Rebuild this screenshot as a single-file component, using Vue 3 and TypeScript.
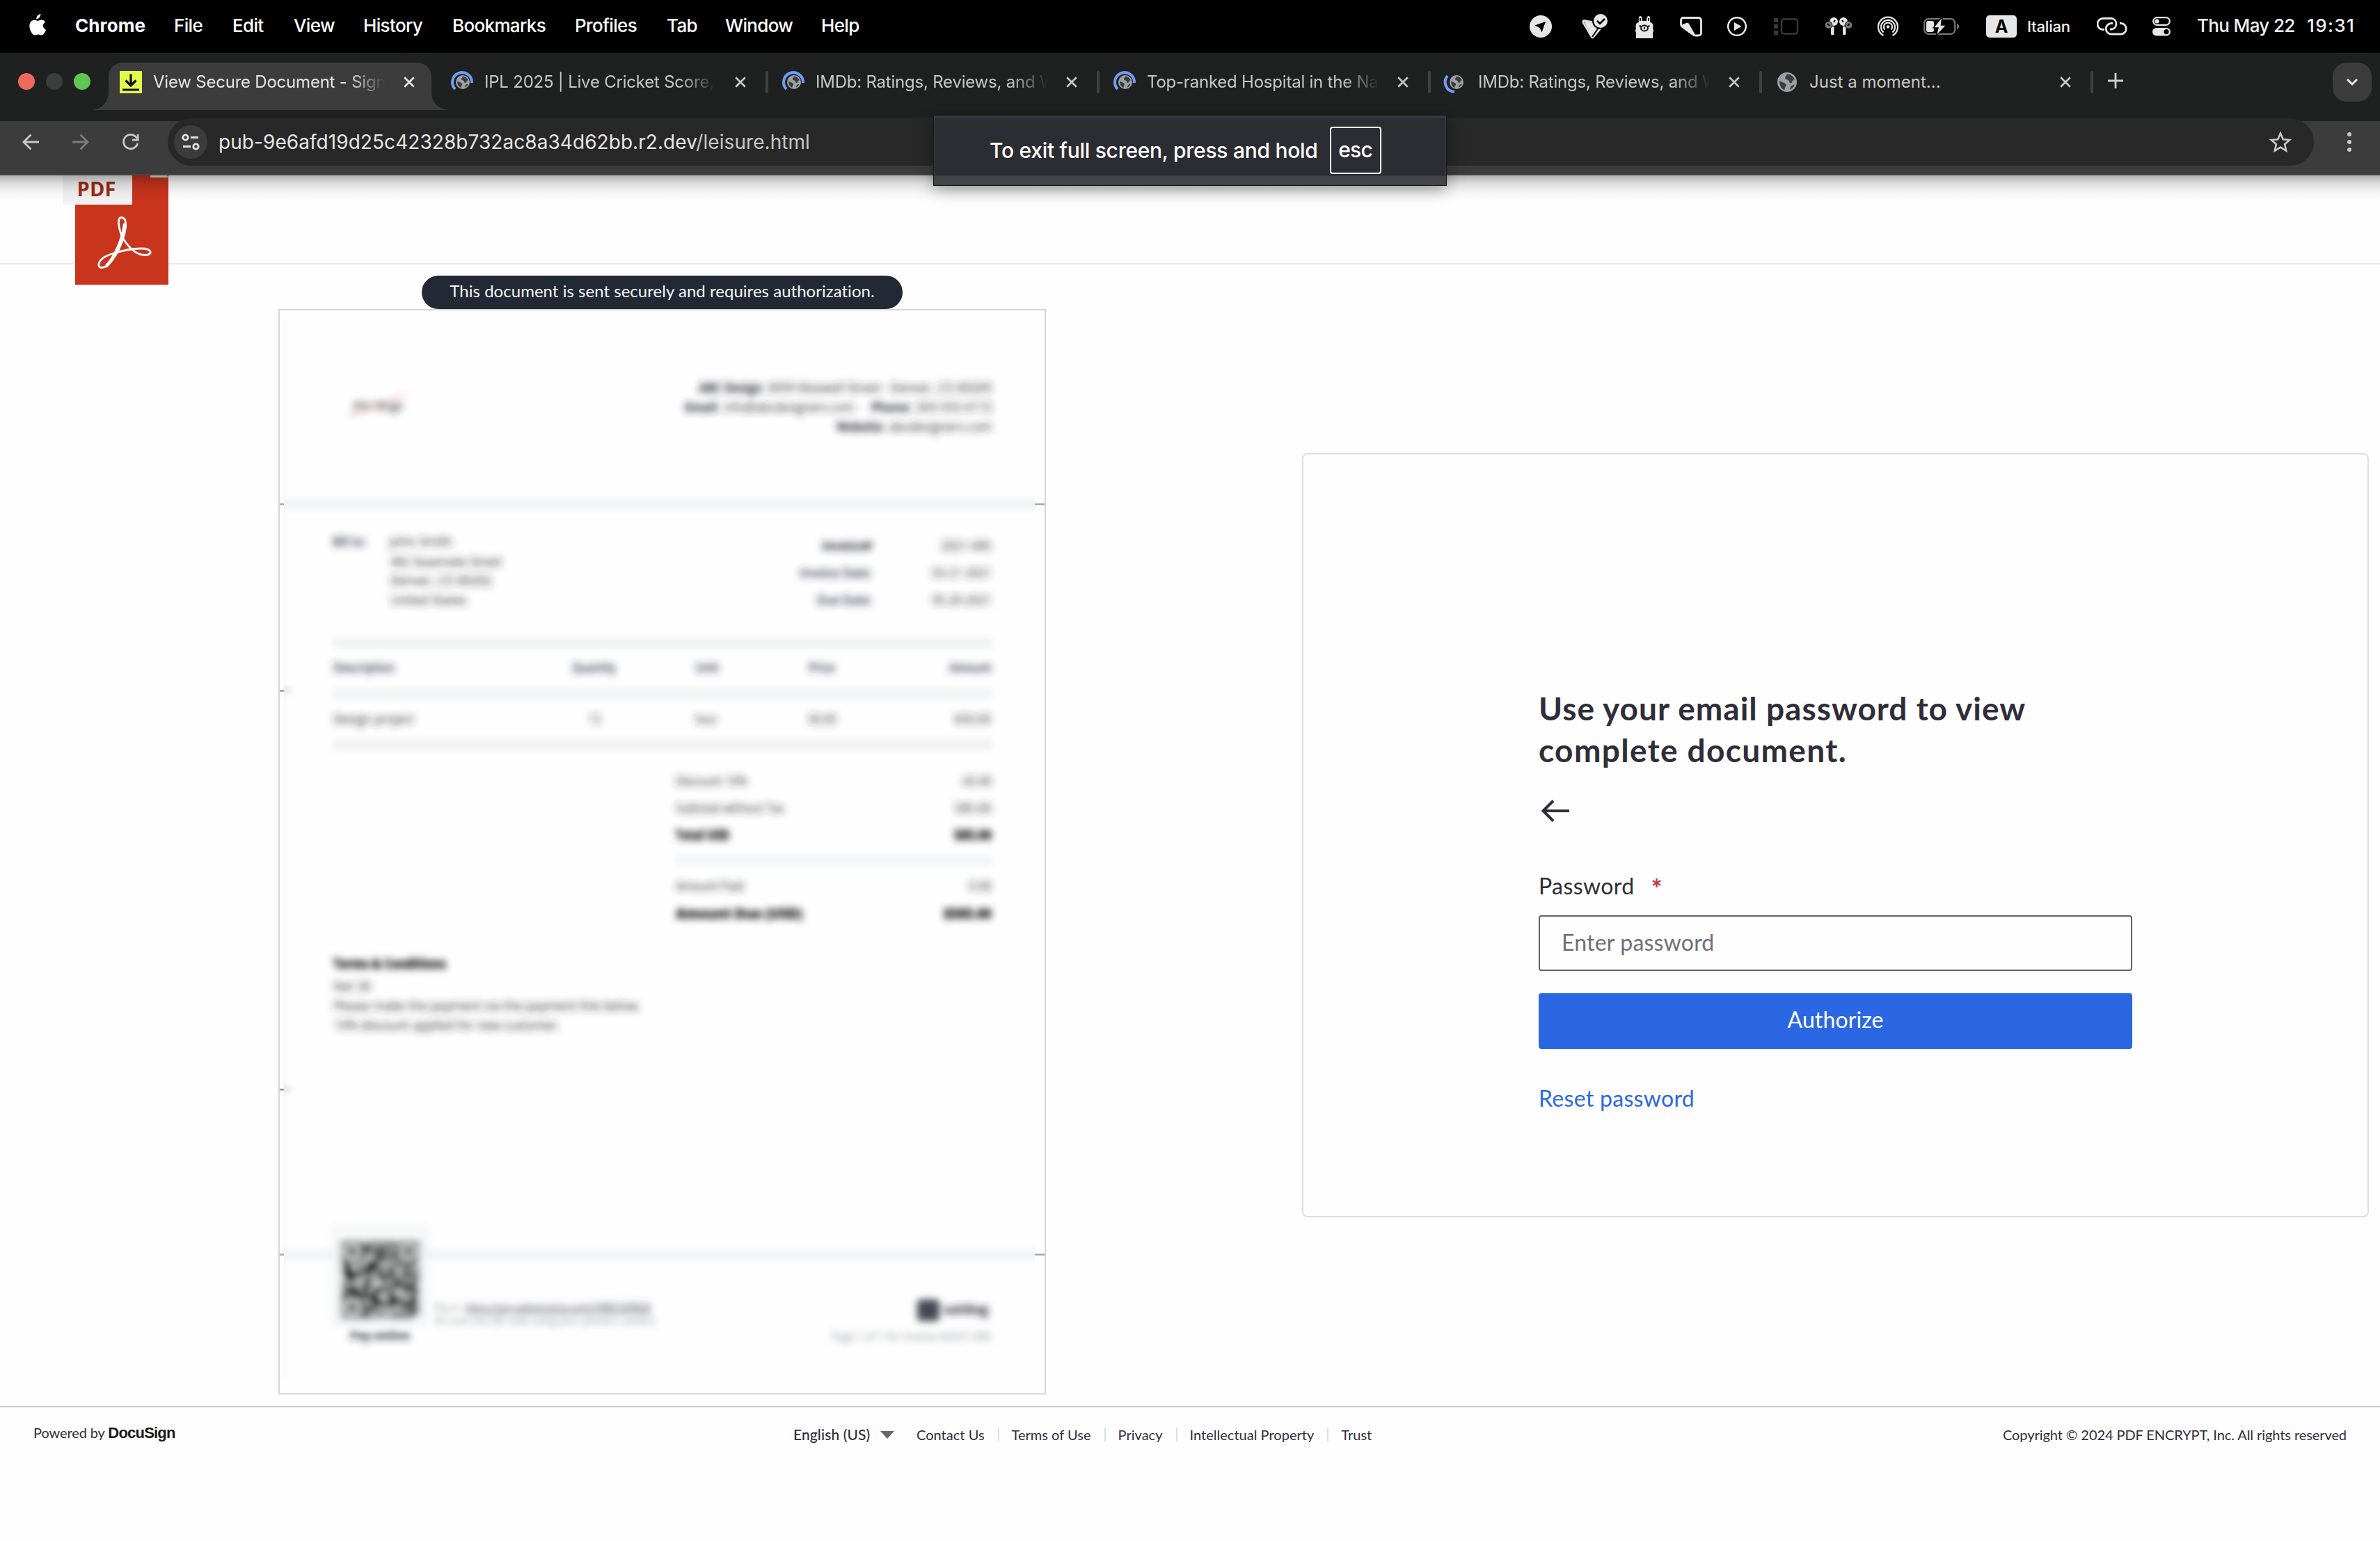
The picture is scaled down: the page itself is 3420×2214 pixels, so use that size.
<script setup lang="ts">
interface Tab { title: string; icon: 'download' | 'loading' | 'loadingLow' | 'globe'; active?: boolean }

const menus = ['File', 'Edit', 'View', 'History', 'Bookmarks', 'Profiles', 'Tab', 'Window', 'Help']

const tabs: Tab[] = [
  { title: 'View Secure Document - Sign', icon: 'download', active: true },
  { title: 'IPL 2025 | Live Cricket Score,', icon: 'loading' },
  { title: 'IMDb: Ratings, Reviews, and W', icon: 'loading' },
  { title: 'Top-ranked Hospital in the Na', icon: 'loading' },
  { title: 'IMDb: Ratings, Reviews, and W', icon: 'loadingLow' },
  { title: 'Just a moment...', icon: 'globe' },
]

const footerLinks = ['Contact Us', 'Terms of Use', 'Privacy', 'Intellectual Property', 'Trust']

/* Lines of the blurred invoice: x, baseline, width, text, weight class */
type Line = [number, number, number, string, string]
const lines: Line[] = [
  [1004, 564, 92, 'ABC Design', 'b'],
  [1102, 564, 324, '3059 Maxwell Street · Denver, CO 80205', 'n'],
  [984, 592, 50, 'Email:', 'b'],
  [1040, 592, 196, 'info@abcdesigners.com ·', 'n'],
  [1252, 592, 58, 'Phone:', 'b'],
  [1316, 592, 110, '303-555-0172', 'n'],
  [1202, 620, 70, 'Website:', 'b'],
  [1277, 620, 149, 'abcdesigners.com', 'n'],
  [478, 785, 48, 'Bill to:', 's'],
  [560, 785, 90, 'John Smith', 'n'],
  [561, 814, 160, '482 Seasmoke Street', 'n'],
  [561, 841, 146, 'Denver, CO 80202', 'n'],
  [561, 869, 110, 'United States', 'n'],
  [1181, 791, 72, 'Invoice#', 'b'],
  [1352, 791, 73, '2021-085', 'n'],
  [1149, 830, 104, 'Invoice Date:', 's'],
  [1339, 830, 86, '03-21-2021', 'n'],
  [1174, 869, 79, 'Due Date:', 's'],
  [1339, 869, 86, '05-20-2021', 'n'],
  [479, 966, 88, 'Description', 's'],
  [822, 966, 63, 'Quantity', 's'],
  [999, 966, 34, 'Unit', 's'],
  [1162, 966, 38, 'Price', 's'],
  [1364, 966, 61, 'Amount', 's'],
  [479, 1040, 116, 'Design project', 'n'],
  [846, 1040, 17, '13', 'n'],
  [999, 1040, 32, 'hour', 'n'],
  [1161, 1040, 41, '50.00', 'n'],
  [1371, 1040, 53, '650.00', 'n'],
  [971, 1129, 103, 'Discount 10%', 'n'],
  [1380, 1129, 45, '-65.00', 'n'],
  [971, 1168, 156, 'Subtotal without Tax', 'n'],
  [1371, 1168, 54, '585.00', 'n'],
  [971, 1207, 77, 'Total USD', 'k'],
  [1371, 1207, 54, '585.00', 'k'],
  [971, 1280, 98, 'Amount Paid', 'n'],
  [1392, 1280, 33, '0.00', 'n'],
  [971, 1320, 182, 'Amount Due (USD)', 'k'],
  [1356, 1320, 69, '$585.00', 'k'],
  [479, 1392, 162, 'Terms & Conditions', 'k'],
  [479, 1424, 54, 'Net 30', 'n'],
  [479, 1452, 442, 'Please make the payment via the payment link below.', 'n'],
  [480, 1480, 325, '10% discount applied for new customer.', 'n'],
  [503, 1925, 86, 'Pay online', 'b'],
]

const rules = [
  { x: 478, y: 915, w: 948, c: '#f1f3f2' },
  { x: 478, y: 988, w: 948, c: '#f2f3f4' },
  { x: 478, y: 1061, w: 948, c: '#f3f3f3' },
  { x: 970, y: 1228, w: 456, c: '#f3f5f7' },
]

/* Module pattern for the payment code */
const N = 25
const inFinder = (r: number, c: number, r0: number, c0: number) => {
  const y = r - r0, x = c - c0
  if (y < 0 || x < 0 || y > 6 || x > 6) return null
  const d = Math.max(Math.abs(y - 3), Math.abs(x - 3))
  return d !== 2
}
const modules: { x: number; y: number }[] = []
let seed = 77
for (let r = 0; r < N; r++) {
  for (let c = 0; c < N; c++) {
    seed = (seed * 1103515245 + 12345) % 2147483648
    const f = inFinder(r, c, 0, 0) ?? inFinder(r, c, 0, 18) ?? inFinder(r, c, 18, 0)
    if (f ?? seed / 2147483648 > 0.26) modules.push({ x: 490 + c * 4.5, y: 1782 + r * 4.5 })
  }
}
</script>

<template>
  <div class="screen">
    <div class="menubar">
      <svg class="apple" width="27" height="32" viewBox="0 0 27 32"><path fill="#fff" d="M18.3 0c.3 3.500-2.600 7.300-6 7.300C12 4 15 .5 18.300 0zM22 17c0-3.600 2.900-5.300 3.100-5.500-1.700-2.500-4.300-2.800-5.300-2.900-2.200-.2-4.400 1.300-5.500 1.300-1.200 0-2.900-1.300-4.800-1.200-2.400 0-4.700 1.400-6 3.600-2.500 4.400-.6 11 1.900 14.600 1.200 1.800 2.700 3.700 4.600 3.700 1.800-.1 2.500-1.200 4.800-1.200s2.900 1.200 4.800 1.100c2 0 3.300-1.800 4.500-3.600 1.400-2 2-4 2-4.100-.1 0-4.100-1.500-4.100-5.800z"/></svg>
      <nav class="menus"><b>Chrome</b><span v-for="m in menus" :key="m">{{ m }}</span></nav>
      <div class="status">
        <svg viewBox="0 0 32 76" width="32" height="76"><circle cx="16" cy="38" r="16" fill="#e6e6e6"/><path d="M7.500 36.500 23 31 17.500 46.500 14.500 40z" fill="#000"/></svg>
        <svg viewBox="0 0 38 76" width="38" height="76"><path d="M3 30.500 16 33l10 9-10.500 13.500z" fill="#e6e6e6"/><path d="M18 32 4 29.500q-3 0-2 3L14 53q1.500 2 3 0l10-12" fill="none" stroke="#e6e6e6" stroke-width="2.500"/><path d="m15 53 9-13" stroke="#000" stroke-width="2"/><circle cx="27" cy="30" r="11" fill="#e6e6e6" stroke="#000" stroke-width="2"/><path d="m22 30 4 4 7-7" fill="none" stroke="#000" stroke-width="2.500"/></svg>
        <svg viewBox="0 0 26 76" width="26" height="76"><path d="M1 55V47q-2-3 0-6-2-8 4-9-1-9 2-9 3 0 3 7h6q0-7 3-7 3 0 2 9 6 1 4 9 2 3 0 6v8z" fill="#e6e6e6"/><ellipse cx="13" cy="40.500" rx="5" ry="4" fill="none" stroke="#000" stroke-width="1.800"/><path d="M7 26v4M19 26v4M5.500 37.500h2.500M18 37.500h2.500M13 39v3" stroke="#000" stroke-width="2"/></svg>
        <svg viewBox="0 0 32 76" width="32" height="76"><path d="M5 25.500h21q4.500 0 4.500 4.500v17q0 4-4.500 4h-4q-2 0-4-2L3 38q-1.500-1-1.500-3v-5q0-4.500 3.500-4.500z" fill="none" stroke="#e6e6e6" stroke-width="2.800"/><path d="M2 36 8 33.500q4-2 5.500 1.500L22 50l-4-1z" fill="#e6e6e6"/></svg>
        <svg viewBox="0 0 28 76" width="28" height="76"><circle cx="14" cy="38" r="12.800" fill="none" stroke="#e6e6e6" stroke-width="2.600"/><path d="m10 32 10.500 6L10 44z" fill="#e6e6e6"/></svg>
        <svg viewBox="0 0 36 76" width="36" height="76"><path d="M0 26h6v6H0zM0 35h6v6H0zM0 44h6v6H0z" fill="#3a3a3a"/><rect x="11" y="27.500" width="23" height="21" rx="3.500" fill="none" stroke="#3a3a3a" stroke-width="2.400"/></svg>
        <svg viewBox="0 0 40 76" width="40" height="76"><g fill="#e6e6e6"><circle cx="13" cy="31" r="6"/><circle cx="27" cy="31" r="6"/><rect x="9" y="38" width="4.500" height="12" rx="1"/><rect x="26" y="38" width="4.500" height="12" rx="1"/></g><g fill="#7b7b7b" stroke="#000"><circle cx="5.500" cy="36" r="5.300"/><circle cx="34.500" cy="36" r="5.300"/></g><path d="m4 34 3 3M36 34l-3 3M15 29l-2 3M25 29l2 3" stroke="#000" stroke-width="2"/></svg>
        <svg viewBox="0 0 30 76" width="30" height="76"><g fill="none" stroke="#e6e6e6" stroke-width="2.200"><path d="M8.500 51A14 14 0 1 1 21.500 51"/><path d="M8.500 46.500A10 10 0 1 1 21.500 46.500"/><path d="M10.500 42.500A6 6 0 1 1 19.500 42.500"/></g><circle cx="15" cy="38.500" r="2.300" fill="#e6e6e6"/></svg>
        <svg viewBox="0 0 52 76" width="52" height="76"><rect x="1.200" y="27.200" width="44" height="21.600" rx="6" fill="none" stroke="#777" stroke-width="2.200"/><path d="M48 34q3 1 3 4t-3 4z" fill="#777"/><rect x="4" y="30" width="11" height="16" rx="3" fill="#e6e6e6"/><path d="M27 24 14 40h7L18 52l15-16h-7.500L27 24z" fill="#e6e6e6" stroke="#000" stroke-width="1.500"/></svg>
        <span class="keyboard">A</span>
        <span class="lang">Italian</span>
        <svg viewBox="0 0 44 76" width="44" height="76"><g fill="none" stroke="#e6e6e6" stroke-width="2.800"><path d="M11 42.500H9A8 8 0 0 1 9 26.500H22A8 8 0 0 1 22 42H19"/><path d="M33 33.500h1.500a7.500 7.500 0 0 1 0 15.500H21a7.500 7.500 0 0 1 0-15.500h2"/></g></svg>
        <svg viewBox="0 0 26 76" width="26" height="76"><rect x="1.200" y="25.200" width="23.600" height="10.600" rx="5.300" fill="none" stroke="#e6e6e6" stroke-width="2.200"/><circle cx="6.500" cy="30.500" r="3" fill="#e6e6e6"/><rect y="40" width="26" height="11.500" rx="5.700" fill="#e6e6e6"/><circle cx="20" cy="45.700" r="3.600" fill="#000"/></svg>
        <span class="date">Thu May 22</span>
        <span class="time">19:31</span>
      </div>
    </div>

    <div class="tabstrip">
      <div class="lights"><i class="red"></i><i class="dim"></i><i class="green"></i></div>
      <div v-for="(t, i) in tabs" :key="i" class="tab" :class="{ active: t.active, ruled: i > 0 }">
        <svg class="favicon" width="32" height="32" viewBox="0 0 32 32">
          <template v-if="t.icon === 'download'">
            <rect width="32" height="32" fill="#e5fb4b"/><path d="M16 4.500V21M8.500 13.500 16 21l7.500-7.500M4 27h24" fill="none" stroke="#111" stroke-width="3.200"/>
          </template>
          <template v-else>
            <g :transform="t.icon === 'globe' ? 'translate(16 16) scale(1.400)' : 'translate(17 16)'">
              <circle r="10" fill="#9aa0a6"/>
              <path d="M-7.800-1.500C-5 .5-2 .5-1 2.500c.5 2-1.500 2-1.500 5.500C-6 7-8 3-7.800-1.500zM0-8.300c4 0 7 3 7.800 6C6-3 6-1.500 5 0c-1 2-3 1-3-1 0-2-3.500-1-4-3C-2-6-1-6 0-8.300zM3 7.500C3 4.500 5 3 7.500 2.500 7 5 5 7 3 7.500z" fill="#3a3d3f"/>
            </g>
            <path v-if="t.icon === 'loading'" d="M6 26A14 14 0 1 1 30 17" fill="none" stroke="#6f9df5" stroke-width="4"/>
            <path v-if="t.icon === 'loadingLow'" d="M4 7A14 14 0 0 0 14 30" fill="none" stroke="#6f9df5" stroke-width="4"/>
          </template>
        </svg>
        <span class="title" :class="{ whole: t.icon === 'globe' }">{{ t.title }}</span>
        <svg class="close" width="16" height="16" viewBox="0 0 16 16"><path d="m1.200 1.200 13.600 13.600m0-13.600L1.200 14.800" stroke="currentColor" stroke-width="2.700"/></svg>
      </div>
      <svg class="plus" width="22" height="22" viewBox="0 0 22 22"><path d="M11 0v22M0 11h22" stroke="#d0d0d0" stroke-width="2.800"/></svg>
      <div class="tabsearch"><svg width="18" height="12" viewBox="0 0 18 12"><path d="m2 2 7 7 7-7" fill="none" stroke="#e8e8e8" stroke-width="3"/></svg></div>
    </div>

    <div class="toolbar">
      <svg width="24" height="24" viewBox="0 0 24 24"><path d="M24 12H2M12.500 1.500 2 12l10.500 10.500" fill="none" stroke="#c9c9c9" stroke-width="2.800"/></svg>
      <svg width="24" height="24" viewBox="0 0 24 24"><path d="M0 12h22M11.500 1.500 22 12 11.500 22.500" fill="none" stroke="#7c7c7c" stroke-width="2.800"/></svg>
      <svg width="24" height="24" viewBox="0 0 26 26"><path d="M23.500 15A11 11 0 1 1 21 5.200L23.500 8" fill="none" stroke="#c9c9c9" stroke-width="3"/><path d="M24 1v9h-9" fill="none" stroke="#c9c9c9" stroke-width="3"/></svg>
      <div class="omnibox">
        <div class="site"><svg width="26" height="24" viewBox="0 0 26 24"><g fill="none" stroke="#e3e3e3" stroke-width="2.800"><circle cx="5.500" cy="5.500" r="3.700"/><path d="M13 5.500h11M2 18.500h11"/><circle cx="20.500" cy="18.500" r="3.700"/></g></svg></div>
        <span class="url">pub-9e6afd19d25c42328b732ac8a34d62bb.r2.dev<em>/leisure.html</em></span>
        <svg class="star" width="32" height="32" viewBox="0 0 32 32"><path d="m16 3.500 3.800 8.700 9.400.8-7.100 6.200 2.100 9.300-8.200-4.900-8.200 4.900 2.100-9.300L2.800 13l9.400-.8z" fill="none" stroke="#c9c9c9" stroke-width="2.600"/></svg>
      </div>
      <div class="kebab"><i></i><i></i><i></i></div>
    </div>

    <div class="page">
      <header class="header">
        <svg class="pdf" width="152" height="157" viewBox="90 252 152 157">
          <path d="M108 252h134v157H108z" fill="#c9341d"/>
          <path d="M216 252h24l2 3h-26z" fill="#e6e6e6"/>
          <path d="M90 252h100v42H90z" fill="#f1f1f1"/>
          <text x="110.500" y="281.500" textLength="56" class="pdftext">PDF</text>
          <g fill="none" stroke="#fff" stroke-linecap="round">
            <path d="M177 343C171 331 167 312.500 174.500 312.500 183 312.500 182 328 176 345 169 366 156 384.500 146.500 384.500 138 384.500 140 371 160 365 175 360 190 357 203 357 219 357 220 366.500 208.500 366.500 197 366.500 186 357 177 343" stroke-width="2.800"/>
            <path d="M179 323C177 342 165 370 153 382" stroke-width="4.600"/>
          </g>
        </svg>
      </header>

      <main class="main">
        <section class="preview">
          <div class="pill">This document is sent securely and requires authorization.</div>
          <svg class="invoice" width="1103" height="1560" viewBox="400 444 1103 1560">
            <defs>
              <clipPath id="sheet"><rect x="408" y="450" width="1079" height="1540"/></clipPath>
              <filter id="soft" x="-5%" y="-5%" width="110%" height="110%"><feGaussianBlur stdDeviation="5.500"/></filter>
              <filter id="haze" x="-20%" y="-20%" width="140%" height="140%"><feGaussianBlur stdDeviation="4"/></filter>
            </defs>
            <rect x="401" y="445" width="1101" height="1557.500" fill="#fefefe" stroke="#d8d5d5" stroke-width="2"/>
            <path d="M402 724.500h1099M402 1802.500h1099" stroke="#a4a6ac" stroke-width="2.500"/>
            <path d="M402 992.500h7M402 1565.500h7" stroke="#999" stroke-width="2.500"/>
            <rect x="408" y="450" width="1079" height="1540" fill="#fefefe"/>
            <path d="M409 460v1520" stroke="#f8f8f8" stroke-width="2"/>
            <g clip-path="url(#sheet)">
              <g filter="url(#haze)">
                <rect v-for="r in rules" :key="r.y" :x="r.x" :y="r.y" :width="r.w" height="17" :fill="r.c"/>
                <rect x="396" y="717" width="1110" height="15" fill="#f0f2f4"/>
                <rect x="396" y="1795" width="1110" height="15" fill="#f1f3f5"/>
                <path d="M404 992h14M404 1565h14" stroke="#ddd" stroke-width="8"/>
              </g>
              <g filter="url(#soft)">
                <rect x="480" y="1764" width="132" height="138" fill="#fbfcfc" stroke="#e8ecef" stroke-width="4"/>
                <rect v-for="(m, i) in modules" :key="i" :x="m.x" :y="m.y" width="4.600" height="4.600" fill="#000"/>
                <text v-for="(l, i) in lines" :key="i" :x="l[0]" :y="l[1]" :textLength="l[2]" lengthAdjust="spacingAndGlyphs" :class="l[4]">{{ l[3] }}</text>
                <path d="M500 600 585 566" stroke="#f7d2ce" stroke-width="4"/>
                <text x="508" y="589" textLength="70" lengthAdjust="spacingAndGlyphs" class="sign">your design</text>
                <text x="624" y="1884" textLength="36" lengthAdjust="spacingAndGlyphs" class="l">Pay at</text>
                <text x="668" y="1884" textLength="267" lengthAdjust="spacingAndGlyphs" class="u">https://pay.saldoinvoice.com/i/9BB7d0f8bB</text>
                <text x="624" y="1903" textLength="318" lengthAdjust="spacingAndGlyphs" class="l">Or scan the QR code using your phone's camera</text>
                <rect x="1318" y="1867" width="32" height="31" rx="5" fill="#454a52"/>
                <text x="1356" y="1888" textLength="64" lengthAdjust="spacingAndGlyphs" class="b">saldog</text>
                <text x="1194" y="1926" textLength="230" lengthAdjust="spacingAndGlyphs" class="l">Page 1 of 1 for Invoice #2021-085</text>
              </g>
            </g>
          </svg>
        </section>

        <section class="panel">
          <h1><span>Use your email password to view</span><span class="second">complete document.</span></h1>
          <svg class="back" width="42" height="34" viewBox="0 0 42 34"><path d="M41 17H4M18 2.500 3.500 17 18 31.500" fill="none" stroke="#2f2e38" stroke-width="4"/></svg>
          <div class="label">Password <span class="req">*</span></div>
          <div class="field">Enter password</div>
          <div class="button">Authorize</div>
          <div class="reset">Reset password</div>
        </section>
      </main>

      <footer class="footer">
        <div class="powered">Powered by <b>DocuSign</b></div>
        <div class="language">English (US)</div>
        <svg class="caret" width="20" height="11" viewBox="0 0 20 11"><path d="M0 0h20L10 11z" fill="#68676f"/></svg>
        <ul class="links"><li v-for="l in footerLinks" :key="l">{{ l }}</li></ul>
        <div class="copy">Copyright © 2024 PDF ENCRYPT, Inc. All rights reserved</div>
      </footer>
      <div class="shade"></div>
    </div>

    <div class="bubble"><span>To exit full screen, press and hold</span><kbd>esc</kbd></div>
  </div>
</template>

<style>
body { margin: 0; background: #fff; }
</style>

<style scoped>
.screen { position: relative; width: 3420px; height: 2214px; overflow: hidden; background: #fefefe; font-family: Inter, "Liberation Sans", sans-serif; display: flex; flex-direction: column; }
.screen * { box-sizing: border-box; }
svg { display: block; flex: none; }

/* system menu bar */
.menubar { height: 76px; background: #000; color: #fff; display: flex; align-items: flex-start; font-size: 26px; font-weight: 500; line-height: 73px; white-space: nowrap; }
.apple { margin: 20px 41px 0 40px; }
.menus { display: grid; grid-template-columns: 142px 84px 88px 100px 128px 176px 132px 84px 138px 60px; letter-spacing: -0.65px; }
.menus b { font-weight: 700; letter-spacing: 0.1px; }
.status { margin-left: 958px; display: grid; grid-template-columns: 75px 77px 64px 68px 67px 73px 76px 66px 90px 59px 100px 80px 64px 158px 70px; color: #f0f0f0; }
.keyboard { width: 44px; height: 32px; margin-top: 22px; border-radius: 5px; background: #e6e6e6; color: #000; font-weight: 700; font-size: 25px; line-height: 32px; text-align: center; }
.lang { font-size: 22px; line-height: 76px; letter-spacing: -0.2px; }
.date { letter-spacing: -0.65px; }
.time { letter-spacing: 1.4px; }

/* tab strip */
.tabstrip { position: relative; z-index: 1; height: 82px; padding-top: 14px; background: #1f2120; display: flex; color: #c7c7c7; }
.lights { display: flex; gap: 16px; width: 156px; padding: 15px 0 0 26px; flex: none; }
.lights i { width: 24px; height: 24px; border-radius: 50%; }
.red { background: #ed6a5e; }
.dim { background: #3c3e3d; }
.green { background: #61c554; }
.tab { position: relative; flex: none; width: 464px; height: 56px; margin-right: 12px; display: flex; align-items: center; padding: 0 24px 0 16px; }
.favicon { overflow: visible; }
.title { margin-left: 16px; width: 341px; flex: none; overflow: hidden; white-space: nowrap; font-size: 24px; line-height: 40px; letter-spacing: -0.22px; mask-image: linear-gradient(90deg, #000 280px, transparent 334px); }
.title.whole { mask-image: none; letter-spacing: 0; }
.close { margin-left: auto; }
.ruled::after { content: ""; position: absolute; left: 468px; top: 12px; width: 4px; height: 32px; border-radius: 2px; background: #404241; }
.active { height: 68px; padding-bottom: 12px; background: #3c3c3c; border-radius: 20px 20px 0 0; color: #e6e6e6; }
.active::before, .active::after { content: ""; position: absolute; bottom: 0; width: 24px; height: 24px; }
.active::before { left: -24px; background: radial-gradient(circle at 0 0, transparent 23.5px, #3c3c3c 24px); }
.active::after { right: -24px; background: radial-gradient(circle at 100% 0, transparent 23.5px, #3c3c3c 24px); }
.plus { margin: 15px 0 0 17px; }
.tabsearch { margin: 0 12px 0 auto; width: 56px; height: 56px; border-radius: 20px; background: #3c3c3c; display: flex; align-items: center; justify-content: center; }

/* address row, with the strip colour showing behind its rounded corners */
.toolbar { position: relative; z-index: 0; height: 94px; display: flex; align-items: center; padding: 0 41px 2px 32px; gap: 48px; background: linear-gradient(#3c3c3c 92px, #464646 92px); border-radius: 16px 16px 0 0; }
.toolbar::before { content: ""; position: absolute; inset: 0 0 auto 0; height: 16px; background: #1f2120; z-index: -2; }
.omnibox { flex: 1; margin-left: -7px; height: 68px; border-radius: 34px; background: #282828; display: flex; align-items: center; padding: 0 32px 0 9px; }
.site { width: 48px; height: 48px; border-radius: 50%; background: #3c3c3c; display: flex; align-items: center; justify-content: center; }
.url { margin-left: 16px; font-size: 28px; line-height: 40px; color: #e6e6e6; letter-spacing: 0.06px; }
.url em { font-style: normal; color: #c7c7c7; }
.star { margin-left: auto; }
.kebab { display: flex; flex-direction: column; gap: 5px; }
.kebab i { width: 6px; height: 6px; border-radius: 50%; background: #c9c9c9; }

/* page */
.page { position: relative; flex: 1; display: flex; flex-direction: column; font-family: Lato, "Liberation Sans", sans-serif; color: #2f2e38; }
.shade { position: absolute; inset: 0 0 auto 0; height: 36px; background: linear-gradient(rgba(0, 0, 0, 0.3), rgba(0, 0, 0, 0.13) 12px, rgba(0, 0, 0, 0.04) 24px, transparent); }
.header { height: 128px; border-bottom: 2px solid #e9e9e9; padding-left: 90px; }
.pdftext { font: 700 29px "Open Sans", sans-serif; fill: #9e2a16; }
.main { height: 1640px; display: flex; align-items: flex-start; }
.preview { width: 1103px; margin: 16px 368px 0 400px; display: flex; flex-direction: column; align-items: center; flex: none; }
.pill { height: 48px; padding: 0 40px 4px; border-radius: 24px; background: #222935; color: #f7f7f7; font-size: 24px; line-height: 44px; letter-spacing: 0.03px; white-space: nowrap; }
.invoice { font-family: "Open Sans", sans-serif; font-size: 20px; }
.n { fill: #2c2c2c; }
.s { fill: #28304a; font-weight: 600; }
.b { fill: #20262e; font-weight: 700; }
.k { fill: #000; font-weight: 800; font-size: 21px; }
.l { fill: #8b8f94; font-size: 17px; }
.u { fill: #4c5056; font-size: 17px; text-decoration: underline; }
.sign { fill: #222; font-style: italic; font-weight: 600; }

.panel { width: 1533px; height: 1098px; margin-top: 271px; border: 2px solid #dedede; border-radius: 8px; padding: 335px 338px 0 338px; background: #fefefe; }
h1 { margin: 0; font-size: 46px; line-height: 60px; font-weight: 700; letter-spacing: 1px; white-space: nowrap; display: flex; flex-direction: column; }
.second { letter-spacing: 1.35px; }
.back { margin: 40px 0 0 3px; }
.label { margin-top: 71px; font-size: 32px; line-height: 40px; height: 40px; letter-spacing: 0.4px; display: flex; gap: 24px; }
.req { color: #c9354f; font-weight: 700; font-size: 38px; line-height: 46px; }
.field { margin-top: 22px; height: 80px; border: 2px solid #62616a; border-radius: 4px; padding-left: 31px; font-size: 32px; line-height: 73px; color: #706f77; letter-spacing: 0.2px; }
.button { margin-top: 32px; height: 80px; border-radius: 4px; background: #2b67e3; color: #fff; text-align: center; font-size: 32px; line-height: 76px; letter-spacing: 0.1px; }
.reset { margin-top: 51px; font-size: 32px; line-height: 40px; color: #2b67e3; letter-spacing: 0.3px; }

.footer { border-top: 2px solid #ccc; height: 80px; display: flex; align-items: flex-start; padding: 19px 48px 0; font-size: 20px; line-height: 40px; white-space: nowrap; }
.powered { width: 1092px; margin-top: -3px; letter-spacing: -0.1px; }
.powered b { font-family: "Liberation Sans", sans-serif; font-size: 22px; letter-spacing: -0.8px; color: #1a1a1a; }
.language { font-size: 21px; font-weight: 500; width: 125px; letter-spacing: 0.1px; }
.caret { margin: 15px 32px 0 0; }
.links { margin: 0; padding: 0; list-style: none; display: flex; letter-spacing: 0.02px; }
.links li { position: relative; padding-right: 39px; }
.links li:not(:last-child)::after { content: ""; position: absolute; right: 18px; top: 10px; height: 20px; border-right: 2px solid #dedede; }
.copy { margin-left: auto; letter-spacing: -0.08px; }

/* full-screen notice */
.bubble { position: absolute; left: 1341px; top: 165px; width: 738px; height: 102px; border: 1px solid #141517; background: linear-gradient(#36373c 4px, #2c2d33 5px, #2c2d33 86px, #414247 87px, #47484d); box-shadow: 0 6px 22px rgba(0, 0, 0, 0.35), inset 0 0 0 1px #3b3c41; color: #fff; display: flex; align-items: center; font-size: 30px; font-weight: 500; letter-spacing: -0.28px; white-space: nowrap; padding-left: 80px; }
kbd { margin-left: 17px; width: 74px; height: 68px; border: 2px solid #fff; border-radius: 4px; font: inherit; line-height: 62px; text-align: center; letter-spacing: -0.8px; }
</style>
